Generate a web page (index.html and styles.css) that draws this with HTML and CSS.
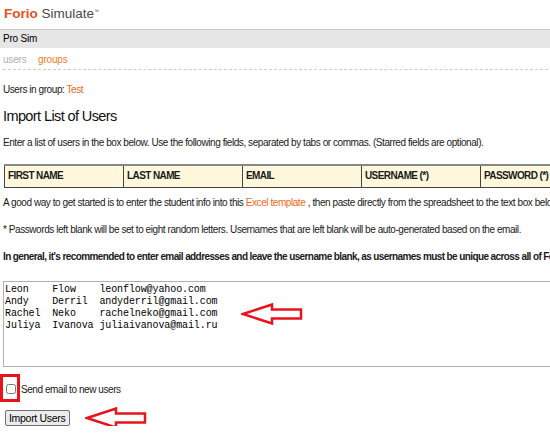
FILE: index.html
```html
<!DOCTYPE html>
<html lang="en">
<head>
    <meta charset="UTF-8">
    <title>Forio Simulate - Import Users</title>
    <link rel="stylesheet" href="styles.css">
</head>
<body>
    <div class="logo"><span class="forio">Forio</span> Simulate<sup>™</sup></div>
    <div class="simbar">Pro Sim</div>
    <div class="tabs">
        <a class="tab">users</a>
        <a class="tab active">groups</a>
    </div>

    <div class="page">
        <p class="group">Users in group: <a class="link">Test</a></p>
        <h1>Import List of Users</h1>
        <p class="intro">Enter a list of users in the box below. Use the following fields, separated by tabs or commas. (Starred fields are optional).</p>

        <table class="fields">
            <tr>
                <td>FIRST NAME</td>
                <td>LAST NAME</td>
                <td>EMAIL</td>
                <td>USERNAME (*)</td>
                <td>PASSWORD (*)</td>
            </tr>
        </table>

        <p>A good way to get started is to enter the student info into this <a class="link">Excel template</a> , then paste directly from the spreadsheet to the text box below.</p>
        <p>* Passwords left blank will be set to eight random letters. Usernames that are left blank will be auto-generated based on the email.</p>
        <p class="note">In general, it's recommended to enter email addresses and leave the username blank, as usernames must be unique across all of Forio.</p>

        <div class="box">
            <textarea class="users">Leon    Flow    leonflow@yahoo.com
Andy    Derril  andyderril@gmail.com
Rachel  Neko    rachelneko@gmail.com
Juliya  Ivanova juliaivanova@mail.ru</textarea>
            <!-- arrow pointing at the pasted rows -->
            <svg class="arrow arrow-list" width="62" height="22" viewBox="0 0 62 22">
                <polygon points="2,11 31,1.5 31,6.5 60,6.5 60,15.5 31,15.5 31,20.5" fill="#fff" stroke="#e8141c" stroke-width="2.5"/>
            </svg>
        </div>

        <div class="sendmail">
            <span class="mark"><input type="checkbox"></span>
            <label>Send email to new users</label>
        </div>

        <div class="actions">
            <button>Import Users</button>
            <svg class="arrow arrow-btn" width="62" height="22" viewBox="0 0 62 22">
                <polygon points="2,11 31,1.5 31,6.5 60,6.5 60,15.5 31,15.5 31,20.5" fill="#fff" stroke="#e8141c" stroke-width="2.5"/>
            </svg>
        </div>
    </div>
</body>
</html>
```

FILE: styles.css
```css
html {
    overflow: hidden;
}
body {
    margin: 0;
    width: 720px;
    font-family: "Liberation Sans", Arial, sans-serif;
    font-size: 10px;
    letter-spacing: -0.43px;
    line-height: 12px;
    color: #1a1a1a;
    background-color: white;
}
.logo {
    height: 29px;
    line-height: 28px;
    padding-left: 4px;
    font-size: 13.5px;
    letter-spacing: 0;
    color: #4a4a4a;
}
.logo .forio {
    color: #e8501a;
    font-weight: bold;
}
.logo sup {
    font-size: 5px;
    line-height: 0;
    vertical-align: 5px;
}
.simbar {
    width: 550px;
    height: 19px;
    line-height: 18px;
    padding-left: 3px;
    box-sizing: border-box;
    border-top: 1px solid #c8c8c8;
    background-color: #e6e6e6;
    letter-spacing: -0.2px;
    color: #000;
}
.tabs {
    width: 545px;
    margin-left: 3px;
    padding: 6px 0 3px;
    border-bottom: 1px dashed #ccc;
    letter-spacing: -0.2px;
}
.tab {
    color: #b0b0b0;
    margin-right: 9px;
}
.tab.active {
    color: #f07d22;
}
.page {
    padding: 0 3px;
}
p {
    margin: 0 0 15px;
    white-space: nowrap;
}
.group {
    margin-top: 14px;
    margin-bottom: 11px;
}
.link {
    color: #f06a1a;
}
h1 {
    margin: 0 0 12px;
    font-size: 14.5px;
    line-height: 18px;
    font-weight: normal;
    letter-spacing: -0.6px;
    color: #111;
}
.intro {
    margin-bottom: 15px;
}
.fields {
    border-collapse: collapse;
    margin: 0 0 9px 1px;
}
.fields td {
    width: 119px;
    box-sizing: border-box;
    height: 22px;
    padding: 0 3px;
    background-color: #fff8dc;
    border: 1px solid #444;
    border-top: 2px solid #888;
    font-size: 10px;
    letter-spacing: -0.6px;
    font-weight: bold;
}
.note {
    font-weight: bold;
    letter-spacing: -0.6px;
    margin-bottom: 18px;
}
.box {
    position: relative;
}
.users {
    display: block;
    width: 660px;
    height: 86px;
    margin: 0;
    padding: 2px 1px;
    box-sizing: border-box;
    border: 1px solid #b0b0b0;
    font-family: "Liberation Mono", "Courier New", monospace;
    font-size: 10px;
    letter-spacing: -0.1px;
    line-height: 12px;
    color: #000;
    resize: none;
}
.arrow {
    position: absolute;
}
.arrow-list {
    left: 238px;
    top: 22px;
}
.sendmail {
    display: flex;
    align-items: center;
    margin: 7px 0 0 -3px;
}
.mark {
    display: inline-block;
    box-sizing: border-box;
    width: 20px;
    height: 28px;
    border: 3px solid #e8141c;
    padding: 7px 0 0 3px;
}
.mark input {
    display: block;
    margin: 0;
    width: 10px;
    height: 10px;
}
.sendmail label {
    margin: 4px 0 0 1px;
}
.actions {
    position: relative;
    margin-top: 8px;
}
button {
    display: block;
    height: 16px;
    padding: 0 3px;
    margin-left: 2px;
    font-family: "Liberation Sans", Arial, sans-serif;
    font-size: 10.5px;
    letter-spacing: -0.3px;
    background-color: #ececec;
    border: 1px solid #707070;
    border-radius: 2px;
    color: #000;
}
.arrow-btn {
    left: 82px;
    top: -3px;
}
```
